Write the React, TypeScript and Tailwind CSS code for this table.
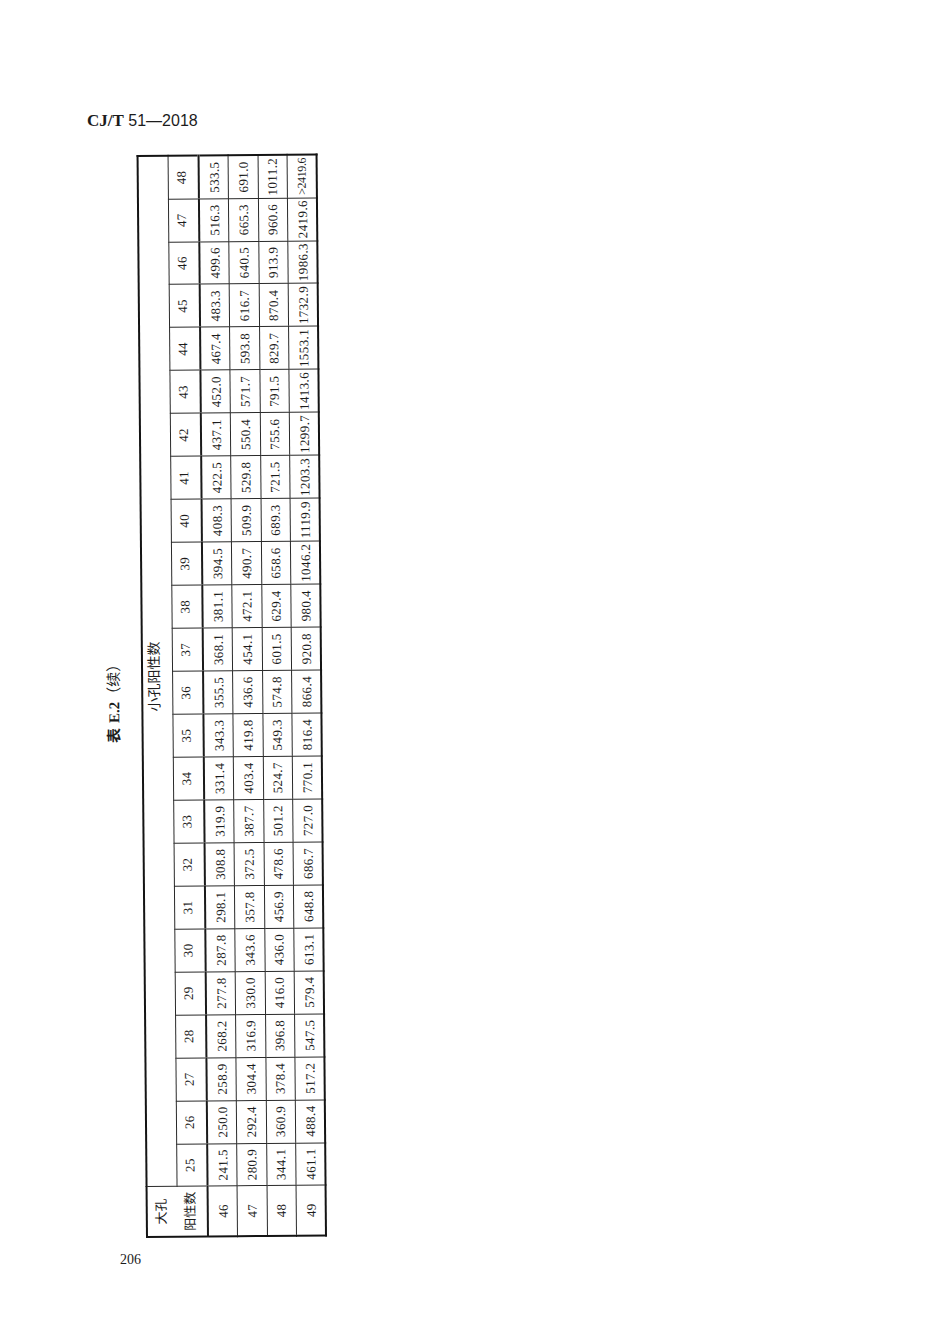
import React from "react";

const cols = Array.from({ length: 24 }, (_, i) => 25 + i);

const rows: { k: string; v: string[] }[] = [
  {
    k: "46",
    v: ["241.5", "250.0", "258.9", "268.2", "277.8", "287.8", "298.1", "308.8", "319.9", "331.4", "343.3", "355.5", "368.1", "381.1", "394.5", "408.3", "422.5", "437.1", "452.0", "467.4", "483.3", "499.6", "516.3", "533.5"],
  },
  {
    k: "47",
    v: ["280.9", "292.4", "304.4", "316.9", "330.0", "343.6", "357.8", "372.5", "387.7", "403.4", "419.8", "436.6", "454.1", "472.1", "490.7", "509.9", "529.8", "550.4", "571.7", "593.8", "616.7", "640.5", "665.3", "691.0"],
  },
  {
    k: "48",
    v: ["344.1", "360.9", "378.4", "396.8", "416.0", "436.0", "456.9", "478.6", "501.2", "524.7", "549.3", "574.8", "601.5", "629.4", "658.6", "689.3", "721.5", "755.6", "791.5", "829.7", "870.4", "913.9", "960.6", "1011.2"],
  },
  {
    k: "49",
    v: ["461.1", "488.4", "517.2", "547.5", "579.4", "613.1", "648.8", "686.7", "727.0", "770.1", "816.4", "866.4", "920.8", "980.4", "1046.2", "1119.9", "1203.3", "1299.7", "1413.6", "1553.1", "1732.9", "1986.3", "2419.6", ">2419.6"],
  },
];

const band = ["小", "孔", "阳", "性", "数"];

export default function App() {
  return (
    <div className="w-[950px] h-[1344px] bg-white text-[#1c1c1c] overflow-hidden font-['Liberation_Serif','Noto_Sans_CJK_SC',serif]">
      <div className="pt-[111px] pl-[87px] leading-[20px] whitespace-nowrap">
        <span className="font-bold text-[17px]">CJ/T</span>
        <span className="font-['Liberation_Sans',sans-serif] text-[16px]"> 51—2018</span>
      </div>

      <div className="flex mt-[24px] pl-[102px] gap-[20px]">
        <div className="w-[24px] h-[1083px] flex items-center justify-center pt-[6px]">
          <div className="rotate-[-90.5deg] flex items-center whitespace-nowrap text-[15px] leading-[18px]">
            <span className="font-bold">表</span>
            <span className="font-bold ml-[5px]">E.2</span>
            <span>（续）</span>
          </div>
        </div>

        <div className="w-[177px] h-[1083px] relative">
          <div className="absolute left-0 top-0 w-[1083px] h-[177px] origin-top-left rotate-[-90.5deg] translate-y-[1083px]">
            <table className="w-[1083px] h-[177px] table-fixed border-collapse border-2 border-[#141414] text-[13px] leading-[15px]">
              <colgroup>
                <col className="w-[50px]" />
                {cols.map((c) => (
                  <col key={c} />
                ))}
              </colgroup>
              <tbody>
                <tr className="h-[29.5px]">
                  <td rowSpan={2} className="border border-[#2a2a2a] border-b-2 border-b-[#1a1a1a] p-0 align-top">
                    <div className="flex flex-col h-[59px] text-[13px]">
                      <div className="h-[29px] flex items-center justify-center pb-[3px]">大孔</div>
                      <div className="h-[30px] flex items-center justify-center pb-[3px]">阳性数</div>
                    </div>
                  </td>
                  <td colSpan={24} className="border border-[#2a2a2a] p-0 pr-[10px] pb-[5px]">
                    <div className="flex justify-center">
                      <div className="w-[70px] flex justify-between text-[14px] leading-[16px]">
                        {band.map((ch) => (
                          <span key={ch}>{ch}</span>
                        ))}
                      </div>
                    </div>
                  </td>
                </tr>
                <tr className="h-[29.5px]">
                  {cols.map((c) => (
                    <td key={c} className="border border-[#2a2a2a] border-b-2 border-b-[#1a1a1a] p-0 text-center tracking-[0.3px] pb-[4px]">
                      {c}
                    </td>
                  ))}
                </tr>
                {rows.map((r) => (
                  <tr key={r.k} className="h-[29.5px]">
                    <td className="border border-[#2a2a2a] p-0 text-center tracking-[0.3px]">{r.k}</td>
                    {r.v.map((v, i) => (
                      <td
                        key={i}
                        className={
                          v.startsWith(">")
                            ? "border border-[#2a2a2a] p-0 text-center text-[12px] tracking-[-0.4px] whitespace-nowrap"
                            : "border border-[#2a2a2a] p-0 text-center tracking-[0.4px] whitespace-nowrap"
                        }
                      >
                        {v}
                      </td>
                    ))}
                  </tr>
                ))}
              </tbody>
            </table>
          </div>
        </div>
      </div>

      <div className="mt-[14px] pl-[120px] text-[14px] leading-[16px]">206</div>
    </div>
  );
}
